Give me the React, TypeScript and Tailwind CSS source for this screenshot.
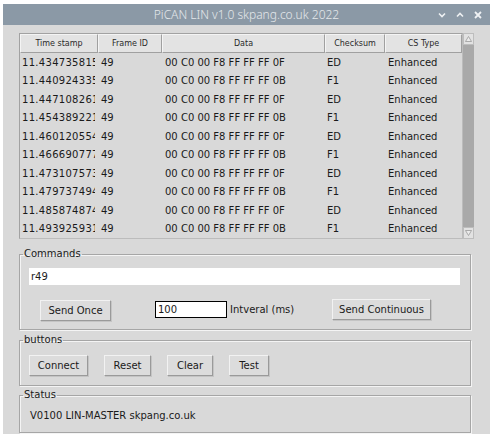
const FONT = { fontFamily: '"DejaVu Sans", Verdana, sans-serif' };

const rows = [
  ['11.434735815', 'ED', '0F'],
  ['11.440924335', 'F1', '0B'],
  ['11.447108261', 'ED', '0F'],
  ['11.454389221', 'F1', '0B'],
  ['11.460120554', 'ED', '0F'],
  ['11.466690777', 'F1', '0B'],
  ['11.473107573', 'ED', '0F'],
  ['11.479737494', 'F1', '0B'],
  ['11.485874874', 'ED', '0F'],
  ['11.493925931', 'F1', '0B'],
];

const cols = [
  { name: 'Time stamp', w: 'w-[78px]' },
  { name: 'Frame ID', w: 'w-[64px]' },
  { name: 'Data', w: 'w-[163px]' },
  { name: 'Checksum', w: 'w-[60px]' },
  { name: 'CS Type', w: 'w-[77px]' },
];

function TkButton({ label, w }: { label: string; w: string }) {
  return (
    <button
      type="button"
      className={`${w} h-[21px] shrink-0 border border-t-[#f2f2f2] border-l-[#f2f2f2] border-r-[#9a9a9a] border-b-[#9a9a9a] bg-[#dcdcdc] text-[10px] text-[#1a1a1a] shadow-[1px_1px_0_#c4c4c4]`}
    >
      {label}
    </button>
  );
}

function Group({ title, children, className }: { title: string; children: React.ReactNode; className?: string }) {
  return (
    <fieldset
      className={`w-[452px] border border-[#a6a6a6] shadow-[inset_1px_1px_0_#f4f4f4,1px_1px_0_#f4f4f4] ${className ?? ''}`}
    >
      <legend className="ml-[3px] px-[1px] text-[10px] leading-[12px] text-[#1a1a1a]">{title}</legend>
      {children}
    </fieldset>
  );
}

export default function App() {
  return (
    <div className="h-[443px] w-[495px] bg-white pl-[3px] pt-[4px]" style={FONT}>
      <div className="flex h-[430px] w-[487px] flex-col bg-[#d9d9d9]">
        {/* title bar */}
        <div className="relative flex h-[21px] shrink-0 items-center justify-center bg-[#8b99a6]">
          <span
            className="text-[12px] font-light text-[#e4e8eb]"
            style={{ fontFamily: '"Noto Sans", "Liberation Sans", sans-serif' }}
          >
            PiCAN LIN v1.0 skpang.co.uk 2022
          </span>
          <div className="absolute right-[8px] top-0 flex h-[21px] items-center gap-[10px] text-[#eef1f3]">
            <svg width="8" height="6" viewBox="0 0 8 6">
              <path d="M1 1.5 L4 4.5 L7 1.5" stroke="currentColor" strokeWidth="1.6" fill="none" />
            </svg>
            <svg width="8" height="6" viewBox="0 0 8 6">
              <path d="M1 4.5 L4 1.5 L7 4.5" stroke="currentColor" strokeWidth="1.6" fill="none" />
            </svg>
            <svg width="8" height="8" viewBox="0 0 8 8">
              <path d="M1 1 L7 7 M7 1 L1 7" stroke="currentColor" strokeWidth="1.8" fill="none" />
            </svg>
          </div>
        </div>

        <div className="flex flex-col pl-[16px] pt-[8px]">
          {/* table with scrollbar */}
          <div className="flex">
            <div className="w-[444px] border border-[#a2a2a2] border-b-[#bcbcbc] border-r-[#bcbcbc]">
              <div className="flex h-[19px]">
                {cols.map((c) => (
                  <div
                    key={c.name}
                    className={`${c.w} flex items-center justify-center border border-t-[#f4f4f4] border-l-[#f4f4f4] border-r-[#a0a0a0] border-b-[#a0a0a0] bg-[#e3e3e3] text-[8px] text-[#2a2a2a]`}
                  >
                    {c.name}
                  </div>
                ))}
              </div>
              {rows.map(([ts, cs, last]) => (
                <div key={ts} className="flex h-[18.5px] items-center text-[10px] text-[#1a1a1a]">
                  <div className="w-[78px] pl-[2px]">
                    <div className="w-[73px] overflow-hidden whitespace-nowrap tracking-[0.3px]">{ts}</div>
                  </div>
                  <div className="w-[64px] pl-[3px]">49</div>
                  <div className="w-[163px] pl-[3px]">00 C0 00 F8 FF FF FF {last}</div>
                  <div className="w-[60px] pl-[2px]">{cs}</div>
                  <div className="w-[77px] pl-[3px]">Enhanced</div>
                </div>
              ))}
            </div>
            <div className="flex w-[11px] flex-col bg-[#c4c4c4]">
              <div className="flex h-[12px] items-center justify-center border border-[#bdbdbd] bg-[#e2e2e2]">
                <svg width="7" height="6" viewBox="0 0 7 6">
                  <path d="M3.5 0.5 L6.5 5.5 L0.5 5.5 Z" fill="#ececec" stroke="#9a9a9a" strokeWidth="0.8" />
                </svg>
              </div>
              <div className="flex-1 bg-[#a9a9a9]" />
              <div className="flex h-[12px] items-center justify-center border border-[#bdbdbd] bg-[#e2e2e2]">
                <svg width="7" height="6" viewBox="0 0 7 6">
                  <path d="M0.5 0.5 L6.5 0.5 L3.5 5.5 Z" fill="#ececec" stroke="#9a9a9a" strokeWidth="0.8" />
                </svg>
              </div>
            </div>
          </div>

          <Group title="Commands" className="mt-[9px]">
            <div className="px-[9px] pb-[8px] pt-[8px]">
              <div className="h-[17px] w-[431px] bg-white pl-[2px] text-[10px] leading-[17px] text-[#1a1a1a]">r49</div>
              <div className="mt-[12px] flex items-center">
                <div className="ml-[11px]">
                  <TkButton label="Send Once" w="w-[71px]" />
                </div>
                <div className="ml-[44px] h-[17px] w-[72px] border border-black bg-white pl-[2px] text-[10px] leading-[15px] text-[#1a1a1a]">
                  100
                </div>
                <span className="ml-[3px] w-[102px] text-[10px] text-[#1a1a1a]">Intveral (ms)</span>
                <TkButton label="Send Continuous" w="w-[99px]" />
              </div>
            </div>
          </Group>

          <Group title="buttons" className="mt-[4px]">
            <div className="flex gap-[16px] px-[9px] pb-[9px] pt-[9px]">
              <TkButton label="Connect" w="w-[59px]" />
              <TkButton label="Reset" w="w-[47px]" />
              <TkButton label="Clear" w="w-[46px]" />
              <TkButton label="Test" w="w-[40px]" />
            </div>
          </Group>

          <Group title="Status" className="mt-[3px]">
            <div className="px-[10px] pb-[10px] pt-[9px] text-[10px] leading-[12px] text-[#1a1a1a]">
              V0100 LIN-MASTER skpang.co.uk
            </div>
          </Group>
        </div>
      </div>
    </div>
  );
}
